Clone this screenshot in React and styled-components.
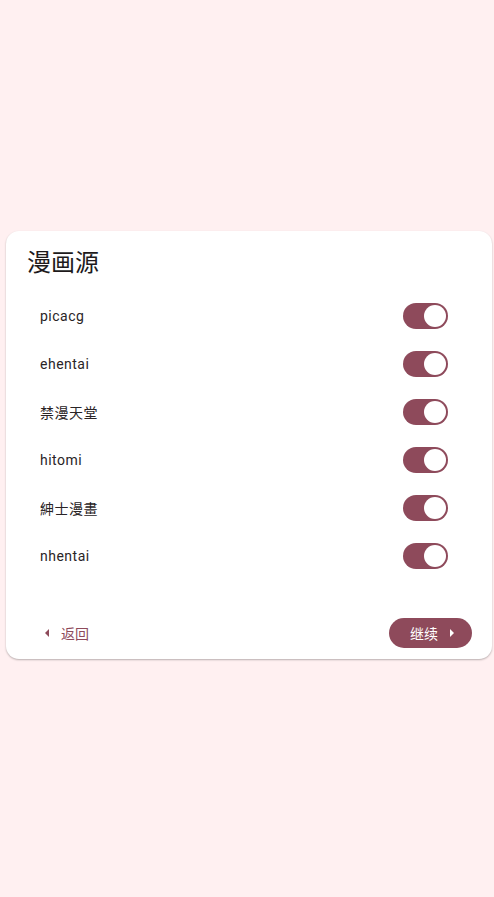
import React, { useState } from 'react';
import styled, { createGlobalStyle } from 'styled-components';

const GlobalStyle = createGlobalStyle`
  html, body {
    margin: 0;
    padding: 0;
    background: #fff0f1;
    font-family: Roboto, "Noto Sans CJK SC", sans-serif;
  }
`;

const Page = styled.div`
  min-height: 897px;
  display: flex;
  align-items: center;
  padding: 0 2px 0 6px;
  box-sizing: border-box;
`;

const Card = styled.section`
  flex: 1;
  background: #ffffff;
  border-radius: 13px;
  box-shadow: 0 1px 2px rgba(0, 0, 0, 0.28);
  padding: 16px 20px 11px 21px;
  margin-top: -8px;
`;

const Title = styled.h2`
  margin: 0 0 13px;
  font-size: 24px;
  font-weight: 400;
  line-height: 32px;
  color: #201a1b;
`;

const List = styled.div`
  display: flex;
  flex-direction: column;
  padding: 0 24px 0 13px;
`;

const Row = styled.label`
  height: 48px;
  display: flex;
  align-items: center;
  justify-content: space-between;
  cursor: pointer;
`;

const Label = styled.span`
  font-size: 14px;
  letter-spacing: 0.5px;
  color: #2a2426;
`;

const Track = styled.span`
  width: 45px;
  height: 26px;
  border-radius: 13px;
  background: ${(p) => (p.$on ? '#8e4a5b' : '#e0d4d6')};
  display: flex;
  align-items: center;
  justify-content: ${(p) => (p.$on ? 'flex-end' : 'flex-start')};
  padding: 0 2px;
  box-sizing: border-box;
`;

const Thumb = styled.span`
  width: 22px;
  height: 22px;
  border-radius: 50%;
  background: #ffffff;
`;

const Footer = styled.div`
  display: flex;
  justify-content: space-between;
  align-items: center;
  margin-top: 38px;
`;

const TextButton = styled.button`
  border: none;
  background: transparent;
  color: #8e4a5b;
  font: inherit;
  font-size: 14px;
  display: flex;
  align-items: center;
  gap: 10px;
  height: 30px;
  padding: 0 12px 0 16px;
  cursor: pointer;
`;

const FilledButton = styled(TextButton)`
  background: #8e4a5b;
  color: #ffffff;
  border-radius: 15px;
  padding: 0 16px 0 21px;
  gap: 10px;
`;

const Arrow = ({ dir }) => (
  <svg width="8" height="10" viewBox="0 0 8 10">
    {dir === 'left' ? (
      <path d="M6 1 L2 5 L6 9 Z" fill="currentColor" />
    ) : (
      <path d="M2 1 L6 5 L2 9 Z" fill="currentColor" />
    )}
  </svg>
);

const sources = ['picacg', 'ehentai', '禁漫天堂', 'hitomi', '紳士漫畫', 'nhentai'];

export default function App() {
  const [enabled, setEnabled] = useState(sources.map(() => true));

  const toggle = (i) => setEnabled((s) => s.map((v, j) => (j === i ? !v : v)));

  return (
    <>
      <GlobalStyle />
      <Page>
        <Card>
          <Title>漫画源</Title>
          <List>
            {sources.map((name, i) => (
              <Row key={name} onClick={() => toggle(i)}>
                <Label>{name}</Label>
                <Track $on={enabled[i]}>
                  <Thumb />
                </Track>
              </Row>
            ))}
          </List>
          <Footer>
            <TextButton>
              <Arrow dir="left" />
              返回
            </TextButton>
            <FilledButton>
              继续
              <Arrow dir="right" />
            </FilledButton>
          </Footer>
        </Card>
      </Page>
    </>
  );
}
